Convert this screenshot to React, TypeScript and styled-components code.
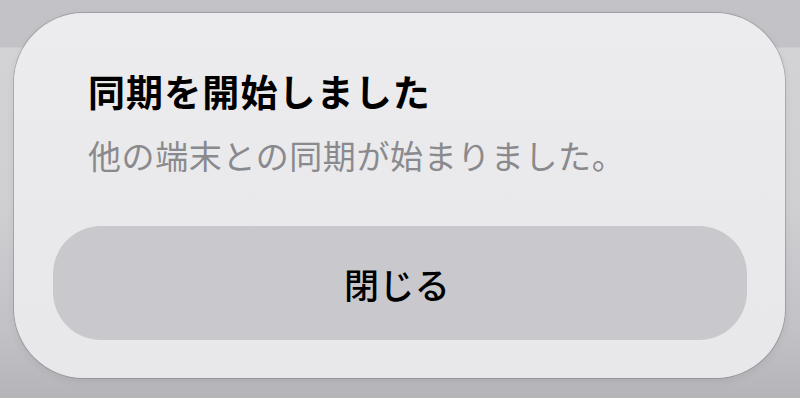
import styled, { createGlobalStyle } from 'styled-components';

const GlobalStyle = createGlobalStyle`
  html, body {
    margin: 0;
    padding: 0;
    width: 800px;
    height: 398px;
    overflow: hidden;
  }

  body {
    font-family: "Noto Sans CJK JP", "Noto Sans", sans-serif;
    background: linear-gradient(
      to bottom,
      #c3c2c7 0px,
      #c3c2c7 47px,
      #d3d3d6 48px,
      #d0d0d3 200px,
      #c2c1c6 330px,
      #b5b4b9 398px
    );
  }
`;

const Backdrop = styled.div`
  display: flex;
  width: 800px;
  height: 398px;
  box-sizing: border-box;
  padding: 13px 15px 20px 14px;
`;

const Dialog = styled.div`
  display: flex;
  flex-direction: column;
  width: 771px;
  height: 365px;
  box-sizing: border-box;
  padding: 54px 38px 38px 39px;
  border-radius: 70px;
  background: linear-gradient(to bottom, #ececee 0%, #e9e9eb 60%, #e8e8eb 100%);
  box-shadow:
    0 0 0 1px rgba(90, 90, 98, 0.3),
    0 2px 8px rgba(0, 0, 0, 0.08);
`;

const TextBlock = styled.div`
  display: flex;
  flex-direction: column;
  gap: 18px;
  padding-left: 35px;
`;

const Title = styled.h2`
  margin: 0;
  font-size: 37px;
  line-height: 48px;
  font-weight: 700;
  letter-spacing: 1.1px;
  color: #000;
`;

const Message = styled.p`
  margin: 0;
  font-size: 33px;
  line-height: 44px;
  font-weight: 400;
  letter-spacing: 0.6px;
  color: #8a8a8e;
`;

const CloseButton = styled.button`
  display: flex;
  align-items: center;
  justify-content: center;
  margin-top: 49px;
  width: 694px;
  height: 114px;
  border: none;
  border-radius: 48px;
  background: #c9c8cd;
  font-family: inherit;
  font-size: 35px;
  font-weight: 500;
  letter-spacing: 0.3px;
  color: #000;
  cursor: pointer;
  padding: 0 6px 0 0;
`;

export default function App() {
  return (
    <>
      <GlobalStyle />
      <Backdrop>
        <Dialog role="alertdialog">
          <TextBlock>
            <Title>同期を開始しました</Title>
            <Message>他の端末との同期が始まりました。</Message>
          </TextBlock>
          <CloseButton>閉じる</CloseButton>
        </Dialog>
      </Backdrop>
    </>
  );
}
